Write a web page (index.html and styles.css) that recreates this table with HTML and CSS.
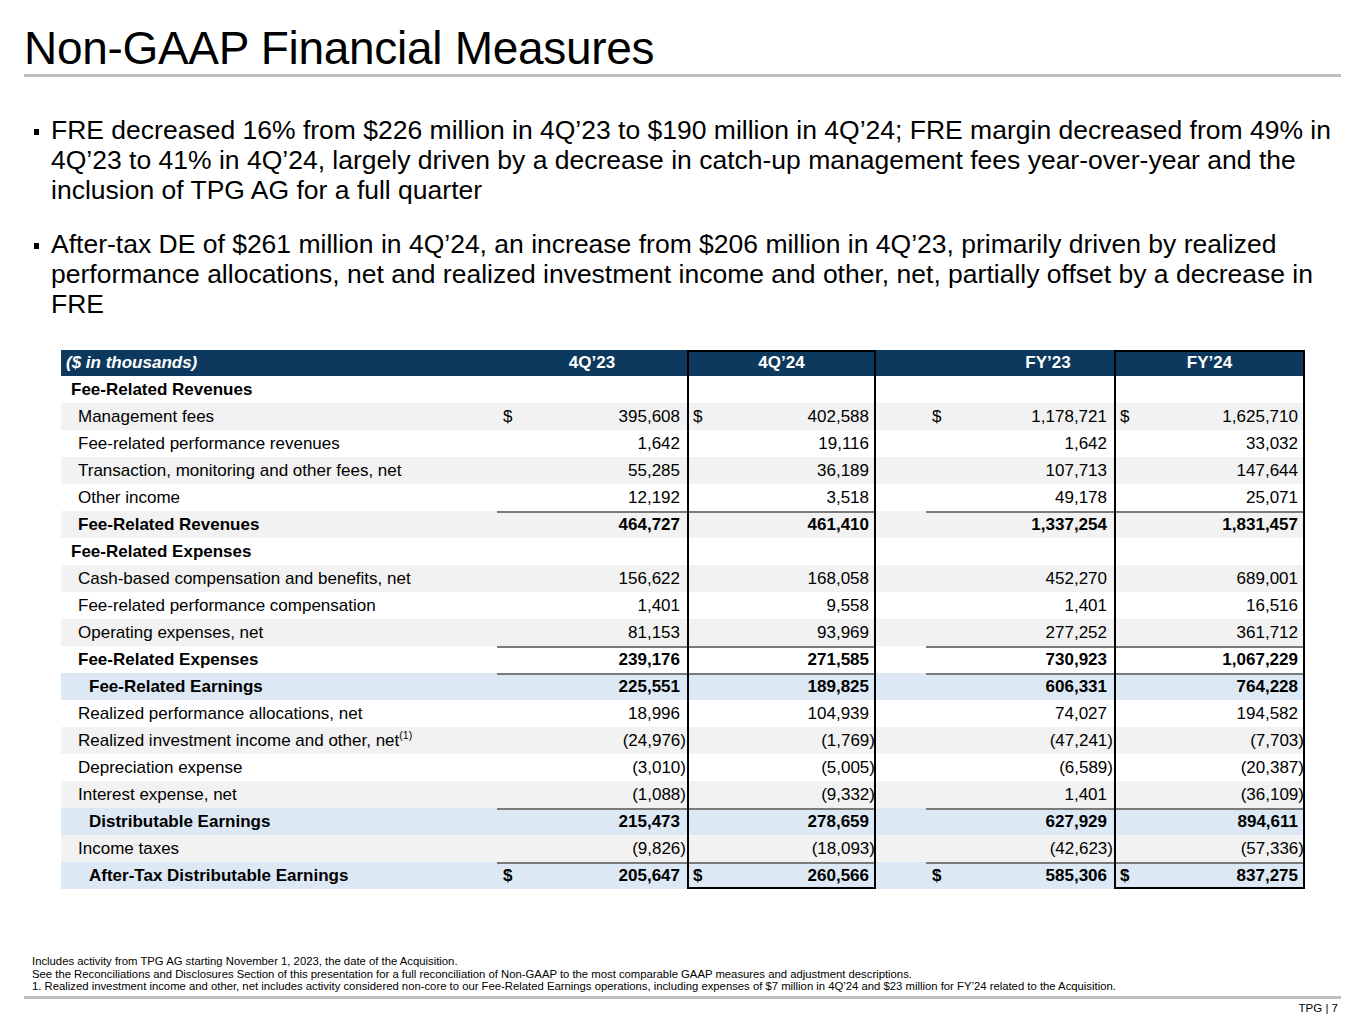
FILE: index.html
```html
<!DOCTYPE html>
<html lang="en">
<head>
<meta charset="utf-8">
<title>Non-GAAP Financial Measures</title>
<link rel="stylesheet" href="styles.css">
</head>
<body>
<div class="slide">
  <header class="title-bar">
    <h1 class="title">Non-GAAP Financial Measures</h1>
  </header>

  <ul class="bullets">
    <li>FRE decreased 16% from $226 million in 4Q’23 to $190 million in 4Q’24; FRE margin decreased from 49% in 4Q’23 to 41% in 4Q’24, largely driven by a decrease in catch-up management fees year-over-year and the inclusion of TPG AG for a full quarter</li>
    <li>After-tax DE of $261 million in 4Q’24, an increase from $206 million in 4Q’23, primarily driven by realized performance allocations, net and realized investment income and other, net, partially offset by a decrease in FRE</li>
  </ul>

  <table class="fin">
    <colgroup>
      <col class="c-label"><col class="c-q23"><col class="c-q24"><col class="c-sp"><col class="c-fy23"><col class="c-fy24">
    </colgroup>
    <thead>
      <tr class="head">
        <th class="lbl">($ in thousands)</th>
        <th>4Q’23</th>
        <th class="bx">4Q’24</th>
        <th></th>
        <th class="fy23h">FY’23</th>
        <th class="bx">FY’24</th>
      </tr>
    </thead>
    <tbody>
      <tr class="w"><td class="lbl sec">Fee-Related Revenues</td><td></td><td class="bx"></td><td></td><td></td><td class="bx"></td></tr>
      <tr class="g"><td class="lbl item">Management fees</td><td><span class="cur">$</span>395,608</td><td class="bx"><span class="cur">$</span>402,588</td><td></td><td><span class="cur">$</span>1,178,721</td><td class="bx"><span class="cur">$</span>1,625,710</td></tr>
      <tr class="w"><td class="lbl item">Fee-related performance revenues</td><td>1,642</td><td class="bx">19,116</td><td></td><td>1,642</td><td class="bx">33,032</td></tr>
      <tr class="g"><td class="lbl item">Transaction, monitoring and other fees, net</td><td>55,285</td><td class="bx">36,189</td><td></td><td>107,713</td><td class="bx">147,644</td></tr>
      <tr class="w"><td class="lbl item">Other income</td><td>12,192</td><td class="bx">3,518</td><td></td><td>49,178</td><td class="bx">25,071</td></tr>
      <tr class="g b"><td class="lbl item">Fee-Related Revenues</td><td class="ul">464,727</td><td class="bx ul">461,410</td><td></td><td class="ul">1,337,254</td><td class="bx ul">1,831,457</td></tr>
      <tr class="w"><td class="lbl sec">Fee-Related Expenses</td><td></td><td class="bx"></td><td></td><td></td><td class="bx"></td></tr>
      <tr class="g"><td class="lbl item">Cash-based compensation and benefits, net</td><td>156,622</td><td class="bx">168,058</td><td></td><td>452,270</td><td class="bx">689,001</td></tr>
      <tr class="w"><td class="lbl item">Fee-related performance compensation</td><td>1,401</td><td class="bx">9,558</td><td></td><td>1,401</td><td class="bx">16,516</td></tr>
      <tr class="g"><td class="lbl item">Operating expenses, net</td><td>81,153</td><td class="bx">93,969</td><td></td><td>277,252</td><td class="bx">361,712</td></tr>
      <tr class="w b"><td class="lbl item">Fee-Related Expenses</td><td class="ul">239,176</td><td class="bx ul">271,585</td><td></td><td class="ul">730,923</td><td class="bx ul">1,067,229</td></tr>
      <tr class="bl b"><td class="lbl sub">Fee-Related Earnings</td><td class="ul">225,551</td><td class="bx ul">189,825</td><td></td><td class="ul">606,331</td><td class="bx ul">764,228</td></tr>
      <tr class="w"><td class="lbl item">Realized performance allocations, net</td><td>18,996</td><td class="bx">104,939</td><td></td><td>74,027</td><td class="bx">194,582</td></tr>
      <tr class="g"><td class="lbl item">Realized investment income and other, net<sup>(1)</sup></td><td>(24,976<span class="cp">)</span></td><td class="bx">(1,769<span class="cp">)</span></td><td></td><td>(47,241<span class="cp">)</span></td><td class="bx">(7,703<span class="cp">)</span></td></tr>
      <tr class="w"><td class="lbl item">Depreciation expense</td><td>(3,010<span class="cp">)</span></td><td class="bx">(5,005<span class="cp">)</span></td><td></td><td>(6,589<span class="cp">)</span></td><td class="bx">(20,387<span class="cp">)</span></td></tr>
      <tr class="g"><td class="lbl item">Interest expense, net</td><td>(1,088<span class="cp">)</span></td><td class="bx">(9,332<span class="cp">)</span></td><td></td><td>1,401</td><td class="bx">(36,109<span class="cp">)</span></td></tr>
      <tr class="bl b"><td class="lbl sub">Distributable Earnings</td><td class="ul">215,473</td><td class="bx ul">278,659</td><td></td><td class="ul">627,929</td><td class="bx ul">894,611</td></tr>
      <tr class="g"><td class="lbl item">Income taxes</td><td>(9,826<span class="cp">)</span></td><td class="bx">(18,093<span class="cp">)</span></td><td></td><td>(42,623<span class="cp">)</span></td><td class="bx">(57,336<span class="cp">)</span></td></tr>
      <tr class="bl b last"><td class="lbl sub">After-Tax Distributable Earnings</td><td class="ul"><span class="cur">$</span>205,647</td><td class="bx ul"><span class="cur">$</span>260,566</td><td></td><td class="ul"><span class="cur">$</span>585,306</td><td class="bx ul"><span class="cur">$</span>837,275</td></tr>
    </tbody>
  </table>

  <footer class="foot">
    <div class="notes">
      <p>Includes activity from TPG AG starting November 1, 2023, the date of the Acquisition.</p>
      <p>See the Reconciliations and Disclosures Section of this presentation for a full reconciliation of Non-GAAP to the most comparable GAAP measures and adjustment descriptions.</p>
      <p>1. Realized investment income and other, net includes activity considered non-core to our Fee-Related Earnings operations, including expenses of $7 million in 4Q’24 and $23 million for FY’24 related to the Acquisition.</p>
    </div>
    <div class="page-no">TPG | 7</div>
  </footer>
</div>
</body>
</html>
```

FILE: styles.css
```css
* { box-sizing: border-box; }

html, body {
  margin: 0;
  padding: 0;
  background: #ffffff;
}

body {
  font-family: "Liberation Sans", Arial, sans-serif;
  color: #000;
}

.slide {
  width: 1365px;
  height: 1024px;
  padding: 0 24px;
}

.title-bar {
  padding-top: 23px;
  border-bottom: 3px solid #bfbfbf;
  padding-bottom: 1px;
}

.title {
  margin: 0;
  font-size: 46px;
  font-weight: 400;
  line-height: 50px;
  letter-spacing: -0.3px;
}

.bullets {
  list-style: none;
  margin: 38px 0 0 0;
  padding: 0 0 0 10px;
  width: 1317px;
}

.bullets li {
  display: flex;
  font-size: 26.5px;
  line-height: 30px;
  margin-bottom: 24px;
}

.bullets li:last-child { margin-bottom: 0; }

.bullets li::before {
  content: "";
  flex: none;
  width: 5px;
  height: 6px;
  background: #000;
  margin-top: 14px;
  margin-right: 12px;
}

/* Table */
.fin {
  margin: 31px 0 0 37px;
  border-collapse: separate;
  border-spacing: 0;
  table-layout: fixed;
  width: 1244px;
  font-size: 17px;
}

.c-label { width: 436px; }
.c-q23 { width: 190px; }
.c-q24 { width: 189px; }
.c-sp { width: 50px; }
.c-fy23 { width: 188px; }
.c-fy24 { width: 191px; }

.fin th {
  height: 26px;
  padding: 0;
  background: #0c395d;
  color: #fff;
  font-weight: 700;
  text-align: center;
  line-height: 26px;
}

.fin th.lbl {
  text-align: left;
  font-style: italic;
  padding-left: 5px;
}

.fin th.fy23h { padding-left: 56px; }

.fin td {
  height: 27px;
  padding: 0 7px 0 6px;
  line-height: 27px;
  text-align: right;
  white-space: nowrap;
}

.fin td.lbl { text-align: left; }
.fin td.sec { padding-left: 10px; font-weight: 700; }
.fin td.item { padding-left: 17px; }
.fin td.sub { padding-left: 28px; }

.fin tr.g { background: #f2f2f2; }
.fin tr.w { background: #ffffff; }
.fin tr.bl { background: #dce8f4; }
.fin tr.b td { font-weight: 700; }

.cur { float: left; }
.cp { margin-right: -6px; }

.fin sup {
  font-size: 10.5px;
  line-height: 0;
  vertical-align: 7px;
}

/* borders */
.fin .ul { box-shadow: inset 0 2px 0 #7a7a7a; }
.fin .bx { box-shadow: inset 2px 0 0 #000, inset -2px 0 0 #000; }
.fin .bx.ul { box-shadow: inset 2px 0 0 #000, inset -2px 0 0 #000, inset 0 2px 0 #7a7a7a; }
.fin th.bx { box-shadow: inset 2px 0 0 #000, inset -2px 0 0 #000, inset 0 2px 0 #000; }
.fin tr.last .bx.ul { box-shadow: inset 2px 0 0 #000, inset -2px 0 0 #000, inset 0 2px 0 #7a7a7a, inset 0 -2px 0 #000; }

/* footer */
.foot {
  margin-top: 66px;
}

.notes {
  padding-left: 8px;
  border-bottom: 3px solid #bfbfbf;
  padding-bottom: 3px;
}

.notes p {
  margin: 0;
  font-size: 11.3px;
  line-height: 12.5px;
}

.page-no {
  text-align: right;
  font-size: 11.5px;
  padding-right: 3px;
  margin-top: 3px;
}
```
